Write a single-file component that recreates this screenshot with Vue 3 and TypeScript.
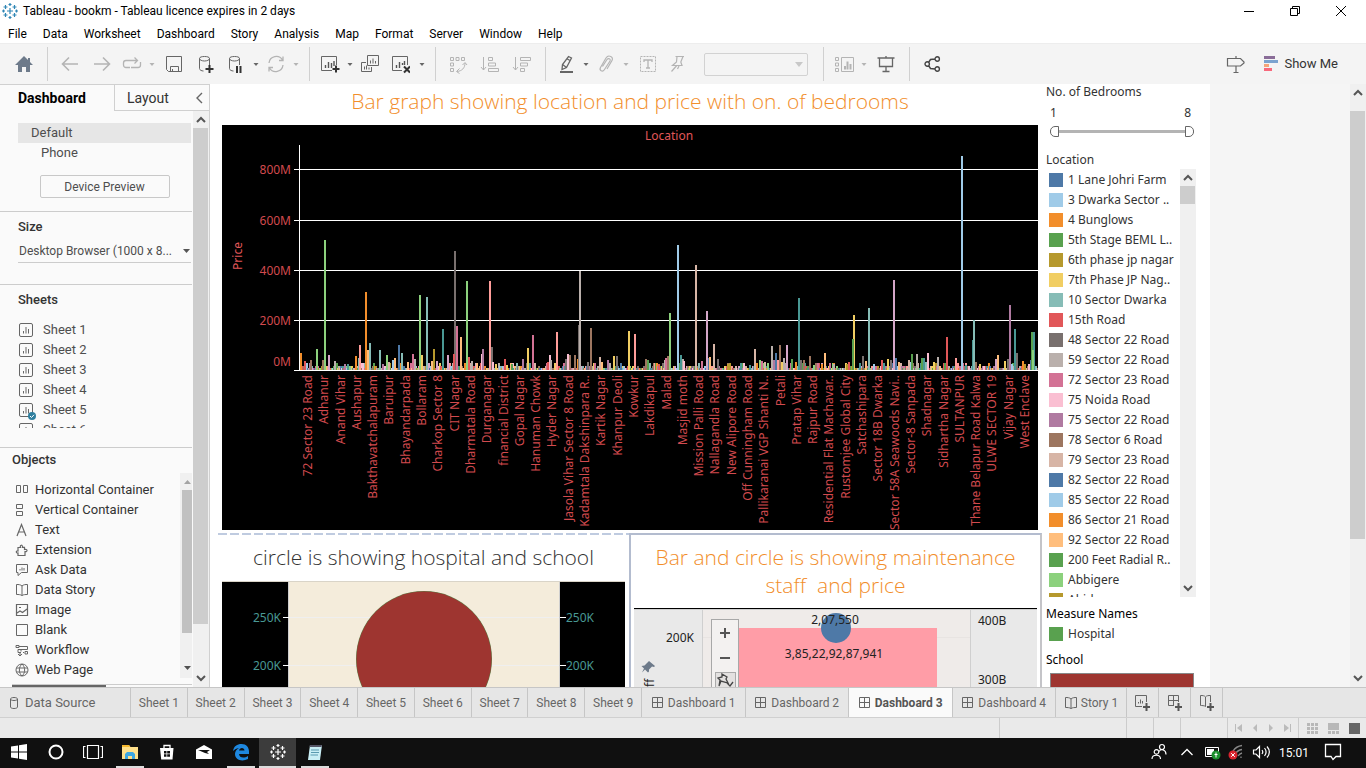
<script setup lang="ts">
import { ref } from 'vue'

interface Tool {
  icon: string
  label: string
  size?: 'narrow' | 'caret'
  dim?: boolean
}

const menus = ['File', 'Data', 'Worksheet', 'Dashboard', 'Story', 'Analysis', 'Map', 'Format', 'Server', 'Window', 'Help']

const caret = (label: string, dim = false): Tool => ({ icon: 'caret', label, size: 'caret', dim })

const toolGroups: Tool[][] = [
  [
    { icon: 'back', label: 'Undo', dim: true },
    { icon: 'forward', label: 'Redo', dim: true },
    { icon: 'loop', label: 'Replay', size: 'narrow', dim: true },
    caret('Replay options', true),
    { icon: 'save', label: 'Save' },
    { icon: 'db-add', label: 'New data source' },
    { icon: 'db-pause', label: 'Pause auto updates', size: 'narrow' },
    caret('Update options'),
    { icon: 'refresh', label: 'Run update', size: 'narrow', dim: true },
    caret('Run options', true),
  ],
  [
    { icon: 'sheet-add', label: 'New worksheet', size: 'narrow' },
    caret('New worksheet options'),
    { icon: 'duplicate', label: 'Duplicate', size: 'narrow' },
    { icon: 'sheet-clear', label: 'Clear sheet' },
    caret('Clear options'),
  ],
  [
    { icon: 'swap', label: 'Swap rows and columns', dim: true },
    { icon: 'sort-asc', label: 'Sort ascending', dim: true },
    { icon: 'sort-desc', label: 'Sort descending', dim: true },
  ],
]

const editTools: Tool[] = [
  { icon: 'highlighter', label: 'Highlight', size: 'narrow' },
  caret('Highlight options'),
  { icon: 'clip', label: 'Group members', size: 'narrow', dim: true },
  caret('Group options', true),
  { icon: 'text-box', label: 'Show mark labels', dim: true },
  { icon: 'pin', label: 'Fix axes', size: 'narrow', dim: true },
]

const viewTools: Tool[] = [
  { icon: 'cards', label: 'Show or hide cards', size: 'narrow', dim: true },
  caret('Card options', true),
  { icon: 'present', label: 'Presentation mode' },
]

const sheets = [1, 2, 3, 4, 5, 6]
const objects = [
  ['horizontal', 'Horizontal Container'],
  ['vertical', 'Vertical Container'],
  ['letter', 'Text'],
  ['extension', 'Extension'],
  ['ask', 'Ask Data'],
  ['book', 'Data Story'],
  ['image', 'Image'],
  ['blank', 'Blank'],
  ['workflow', 'Workflow'],
  ['globe', 'Web Page'],
]

const low = ref(1)
const high = ref(8)

const legend = [
  ['1 Lane Johri Farm', '#4e79a7'],
  ['3 Dwarka Sector ..', '#a0cbe8'],
  ['4 Bunglows', '#f28e2b'],
  ['5th Stage BEML L..', '#59a14f'],
  ['6th phase jp nagar', '#b6992d'],
  ['7th Phase JP Nag..', '#f1ce63'],
  ['10 Sector Dwarka', '#86bcb6'],
  ['15th Road', '#e15759'],
  ['48 Sector 22 Road', '#79706e'],
  ['59 Sector 22 Road', '#bab0ac'],
  ['72 Sector 23 Road', '#d37295'],
  ['75 Noida Road', '#fabfd2'],
  ['75 Sector 22 Road', '#b07aa1'],
  ['78 Sector 6 Road', '#9d7660'],
  ['79 Sector 23 Road', '#d7b5a6'],
  ['82 Sector 22 Road', '#4e79a7'],
  ['85 Sector 22 Road', '#a0cbe8'],
  ['86 Sector 21 Road', '#f28e2b'],
  ['92 Sector 22 Road', '#ffbe7d'],
  ['200 Feet Radial R..', '#59a14f'],
  ['Abbigere', '#8cd17d'],
  ['Abids', '#b6992d'],
]

/* Tableau 20 palette, keyed by a short code used in the bar list */
const palette: Record<string, string> = {
  b: '#4e79a7', B: '#a0cbe8', o: '#f28e2b', O: '#ffbe7d', g: '#59a14f', G: '#8cd17d',
  y: '#b6992d', Y: '#f1ce63', t: '#499894', T: '#86bcb6', r: '#e15759', R: '#ff9d9a',
  k: '#79706e', K: '#bab0ac', p: '#d37295', P: '#fabfd2', v: '#b07aa1', V: '#d4a6c8',
  n: '#9d7660', N: '#d7b5a6',
}

/* x offset from the axis, height, colour code */
const priceBars: [number, number, string][] = [
  [0, 17, 'o'], [4, 9, 'r'], [10, 10, 'n'], [16, 21, 'G'], [24, 130, 'G'], [22, 10, 'n'], [28, 15, 'V'], [34, 9, 'K'],
  [44, 6, 'v'], [47, 6, 't'], [55, 14, 'o'], [58, 12, 'T'], [59, 25, 'R'], [62, 7, 'P'], [65, 78, 'o'], [67, 20, 'O'],
  [69, 27, 'T'], [79, 20, 'T'], [82, 6, 'v'], [86, 15, 'G'], [88, 8, 'N'], [92, 10, 'B'], [94, 12, 'O'], [98, 25, 'b'],
  [101, 17, 'T'], [107, 8, 'O'], [112, 16, 'p'], [114, 11, 'K'], [119, 75, 'G'], [121, 15, 'Y'], [126, 73, 'T'],
  [131, 9, 'O'], [133, 21, 'y'], [136, 9, 'V'], [142, 41, 't'], [147, 15, 'V'], [154, 119, 'k'], [153, 16, 'r'],
  [156, 44, 'p'], [160, 33, 'O'], [166, 89, 'G'], [168, 13, 'r'], [171, 9, 'K'], [176, 7, 'O'], [181, 16, 'P'],
  [182, 21, 'v'], [191, 23, 'k'], [189, 89, 'R'], [192, 8, 'P'], [195, 6, 'Y'], [204, 11, 'r'], [206, 5, 'Y'], [211, 6, 'g'],
  [222, 11, 'v'], [227, 22, 'Y'], [232, 35, 'p'], [234, 7, 'N'], [247, 8, 'r'], [249, 15, 'P'], [250, 10, 'K'],
  [256, 38, 'R'], [265, 11, 'k'], [267, 16, 'P'], [269, 15, 'n'], [274, 15, 'n'], [277, 11, 'o'], [278, 45, 'k'],
  [279, 99, 'K'], [287, 8, 'k'], [290, 42, 'n'], [294, 7, 'p'], [299, 13, 'N'], [301, 8, 'O'], [307, 10, 'v'],
  [309, 7, 'K'], [313, 14, 'Y'], [316, 14, 'k'], [320, 7, 'b'], [328, 39, 'Y'], [334, 36, 'R'], [345, 11, 'n'],
  [347, 10, 'g'], [358, 6, 'r'], [364, 10, 'K'], [365, 12, 'p'], [367, 14, 'n'], [369, 57, 'G'], [377, 125, 'B'],
  [380, 15, 't'], [382, 11, 'K'], [383, 9, 'P'], [395, 105, 'N'], [401, 9, 'p'], [406, 59, 'V'], [408, 12, 'b'],
  [409, 13, 'O'], [413, 26, 'N'], [417, 11, 'k'], [427, 6, 'y'], [429, 7, 'y'], [440, 7, 't'], [443, 7, 'P'], [449, 5, 't'],
  [454, 21, 'N'], [456, 7, 'o'], [459, 10, 'G'], [461, 9, 'p'], [464, 8, 'N'], [467, 7, 'G'], [471, 24, 'K'], [473, 10, 'v'],
  [475, 17, 'b'], [477, 10, 'R'], [479, 25, 'n'], [481, 8, 'Y'], [483, 12, 'K'], [486, 25, 'V'], [491, 11, 'g'],
  [495, 8, 'o'], [498, 72, 't'], [500, 10, 'k'], [503, 10, 'n'], [509, 14, 'n'], [513, 5, 'G'], [517, 7, 'p'], [521, 6, 'o'],
  [524, 17, 'O'], [533, 6, 'K'], [546, 6, 'y'], [548, 8, 'r'], [553, 55, 'Y'], [552, 31, 'g'], [559, 7, 't'], [562, 14, 'k'],
  [565, 9, 'O'], [568, 62, 'T'], [573, 6, 'B'], [581, 10, 'r'], [583, 7, 't'], [587, 11, 'Y'], [590, 10, 'k'], [593, 90, 'V'],
  [595, 12, 'b'], [598, 8, 'O'], [608, 10, 'N'], [610, 8, 'B'], [611, 16, 'g'], [616, 16, 'K'], [621, 12, 'g'], [623, 12, 't'],
  [625, 8, 'T'], [627, 17, 'P'], [633, 8, 'Y'], [637, 13, 'K'], [644, 7, 'g'], [646, 33, 'r'], [655, 12, 'R'], [661, 214, 'B'],
  [665, 5, 't'], [672, 30, 't'], [673, 50, 'T'], [675, 8, 'n'], [679, 6, 'Y'], [695, 11, 'V'], [697, 15, 'O'], [704, 9, 'Y'],
  [707, 11, 'k'], [709, 65, 'v'], [711, 6, 'B'], [714, 41, 't'], [716, 17, 'k'], [722, 9, 'o'], [724, 6, 'y'], [728, 6, 'P'],
  [730, 10, 'b'], [731, 38, 'g'], [733, 38, 't'], [732, 20, 'G'],
]

/* Low priced localities: a dense run of short bars along the axis */
const shortBars = (() => {
  const codes = Object.keys(palette)
  const list: [number, number, string][] = []
  let seed = 7
  const next = () => {
    seed = (seed * 1103515245 + 12345) % 2147483648
    return seed / 2147483648
  }
  for (let x = 0; x < 738; x += 1) {
    const r = next()
    const h = r < 0.6 ? 2 : r < 0.88 ? 4 : 7
    list.push([x, h, codes[Math.floor(next() * codes.length)]])
  }
  return list
})()

const bars = [...shortBars, ...priceBars].map(([x, h, c]) => ({ x: 78 + x, y: 245 - h, h, fill: palette[c] }))

const gridLines = [
  { y: 44, label: '800M', ty: 49 },
  { y: 95, label: '600M', ty: 100 },
  { y: 145, label: '400M', ty: 150 },
  { y: 195, label: '200M', ty: 200 },
  { y: 245, label: '0M', ty: 241 },
]

const places = [
  '72 Sector 23 Road', 'Adhanur', 'Anand Vihar', 'Aushapur', 'Bakthavatchalapuram', 'Baruipur', 'Bhayandarpada',
  'Bollaram', 'Charkop Sector 8', 'CIT Nagar', 'Dharmatala Road', 'Durganagar', 'financial District', 'Gopal Nagar',
  'Hanuman Chowk', 'Hyder Nagar', 'Jasola Vihar Sector 8 Road', 'Kadamtala Dakshinpara R..', 'Kartik Nagar',
  'Khanpur Deoli', 'Kowkur', 'Lakdikapul', 'Malad', 'Masjid moth', 'Mission Palli Road', 'Nallagandla Road',
  'New Alipore Road', 'Off Cunningham Road', 'Pallikaranai VGP Shanti N..', 'Petali', 'Pratap Vihar', 'Rajpur Road',
  'Residential Flat Machavar..', 'Rustomjee Global City', 'Satchashipara', 'Sector 18B Dwarka',
  'Sector 58A Seawoods Navi..', 'Sector-8 Sanpada', 'Shadnagar', 'Sidhartha Nagar', 'SULTANPUR',
  'Thane Belapur Road Kalwa', 'ULWE SECTOR 19', 'Vijay Nagar', 'West Enclave',
]
const placeX = (i: number) => Math.round(90 + (i * 717) / 44)

const sheetTabs = [1, 2, 3, 4, 5, 6, 7, 8, 9]
const dashTabs = [1, 2, 3, 4]
</script>

<template>
  <div class="app">
    <svg class="sprite" aria-hidden="true">
      <symbol id="logo" viewBox="0 0 16 16">
        <path d="M8 5v6M5 8h6M3.500 2v4M1.500 4h4M12.500 2v4M10.500 4h4M3.500 10v4M1.500 12h4M12.500 10v4M10.500 12h4M8 0v3M6.500 1.500h3M8 13v3M6.500 14.500h3M1.500 6.500v3M0 8h3M14.500 6.500v3M13 8h3" fill="none" stroke="currentColor" stroke-width="1.200" />
      </symbol>
      <symbol id="home" viewBox="0 0 20 20"><path d="M10 2 1 11h3v7h4v-5h4v5h4v-7h3l-3-3V4h-2v2z" fill="#6d7a8a" /></symbol>
      <symbol id="caret" viewBox="0 0 20 20"><path d="M7.500 9h5L10 12z" fill="currentColor" /></symbol>
      <symbol id="back" viewBox="0 0 20 20"><path d="M18 10H3M9 3.500 2.500 10 9 16.500" fill="none" stroke="currentColor" stroke-width="1.600" /></symbol>
      <symbol id="forward" viewBox="0 0 20 20"><path d="M2 10h15M11 3.500 17.500 10 11 16.500" fill="none" stroke="currentColor" stroke-width="1.600" /></symbol>
      <symbol id="loop" viewBox="0 0 20 20"><path d="M8 13.500H4a2.500 2.500 0 0 1-2.500-2.500V9A2.500 2.500 0 0 1 4 6.500h11M12.500 3.500l3 3-3 3M18.500 8v3a2.500 2.500 0 0 1-2.500 2.500H9" fill="none" stroke="currentColor" stroke-width="1.300" /></symbol>
      <symbol id="save" viewBox="0 0 20 20"><path d="M2.500 2.500h15v15h-13l-2-2zM6.500 17v-4.500h8V17M8.500 15v2" fill="none" stroke="currentColor" /></symbol>
      <symbol id="db-add" viewBox="0 0 20 20">
        <path d="M3.500 4.500v10c0 1.500 2 2.500 4 2.500M3.500 4.500C3.500 3 6 2.500 8.500 2.500s5 .5 5 2-2.500 2.500-5 2.500-5-1-5-2.500zM13.500 4.500V11" fill="none" stroke="currentColor" />
        <path d="M13.500 11v8M9.500 15h8" fill="none" stroke="#333" stroke-width="2" />
      </symbol>
      <symbol id="db-pause" viewBox="0 0 20 20">
        <path d="M3.500 4.500v10c0 1.500 2 2.500 4 2.500M3.500 4.500C3.500 3 6 2.500 8.500 2.500s5 .5 5 2-2.500 2.500-5 2.500-5-1-5-2.500zM13.500 4.500V11" fill="none" stroke="currentColor" />
        <path d="M11 12v7M14.500 12v7" fill="none" stroke="#333" stroke-width="2" />
      </symbol>
      <symbol id="refresh" viewBox="0 0 20 20"><path d="M3 9a7.300 7.300 0 0 1 13.500-3M17 2.500V6.500h-4M17 11a7.300 7.300 0 0 1-13.500 3M3 17.500v-4h4" fill="none" stroke="currentColor" stroke-width="1.300" /></symbol>
      <symbol id="sheet-add" viewBox="0 0 20 20">
        <path d="M16.500 11V2.500h-15v14H12" fill="none" stroke="currentColor" />
        <path d="M5.500 14v-3M8.500 14V8M11.500 14V9M14 12V7" fill="none" stroke="#555" stroke-width="1.400" />
        <path d="M16 11.500v7M12.500 15h7" fill="none" stroke="#333" stroke-width="2" />
      </symbol>
      <symbol id="duplicate" viewBox="0 0 20 20">
        <path d="M7.500 1.500h11v10h-11zM6 8.500H1.500v9h10V13" fill="none" stroke="currentColor" />
        <path d="M10.500 9.500v-3M13 9.500v-5M15.500 9.500V7M4.500 15.500v-3M6.500 15.500v-4M9 15.500v-2" fill="none" stroke="currentColor" />
      </symbol>
      <symbol id="sheet-clear" viewBox="0 0 20 20">
        <path d="M17.500 11V2.500h-15v14H12" fill="none" stroke="currentColor" />
        <path d="M6.500 14v-3M9.500 14V8M12.500 11V9M14.500 11V7" fill="none" stroke="#555" stroke-width="1.400" />
        <path d="M14 12.500l6 6M20 12.500l-6 6" fill="none" stroke="#333" stroke-width="2" />
      </symbol>
      <symbol id="swap" viewBox="0 0 20 20"><path d="M2.500 3.500h3v3h-3zM8 3.500h3v3H8zM13.500 3.500h3v3h-3zM2.500 9h3v3h-3zM2.500 14.500h3v3h-3zM17 9c0 5-3 8-8 8.500M14.500 11 17 8.500l2 2.500M11.500 14.500 8.500 17.500l3 2" fill="none" stroke="currentColor" /></symbol>
      <symbol id="sort-asc" viewBox="0 0 20 20"><path d="M3.500 3v13M1 13l2.500 3L6 13M8.500 3.500h4v3h-4zM8.500 9h7v3h-7zM8.500 14.500h10v3h-10z" fill="none" stroke="currentColor" /></symbol>
      <symbol id="sort-desc" viewBox="0 0 20 20"><path d="M3.500 3v13M1 13l2.500 3L6 13M8.500 3.500h10v3h-10zM8.500 9h7v3h-7zM8.500 14.500h4v3h-4z" fill="none" stroke="currentColor" /></symbol>
      <symbol id="highlighter" viewBox="0 0 20 20">
        <path d="M12.500 2.500l3 1.500-5 9.500-4.500 2 .5-5zM6.500 10.500l4 3M10.500 4.500 14 6.500" fill="none" stroke="currentColor" stroke-width="1.300" />
        <path d="M4 18h13" stroke="currentColor" stroke-width="2" />
      </symbol>
      <symbol id="clip" viewBox="0 0 20 20"><path d="M6.500 12.500 11 5.500c1.500-2 4-.5 3 1.500L8.500 15.500c-2 3-5.500 1-4-2L10 4c2.500-4 8-1 6 2.500l-5 8.500" fill="none" stroke="currentColor" stroke-width="1.200" /></symbol>
      <symbol id="text-box" viewBox="0 0 20 20">
        <path d="M2.500 2.500h15v15h-15z" fill="none" stroke="currentColor" stroke-dasharray="2 1" />
        <path d="M6 8V6h8v2M10 6v8M8 14h4" fill="none" stroke="currentColor" stroke-width="1.300" />
      </symbol>
      <symbol id="pin" viewBox="0 0 20 20"><path d="M7.500 2.500h8.500M9 2.500 8.500 8l-4 3.500h9.500L12.800 8 15 2.500M8.800 11.500 3.500 17.500M11 12l-1.500 3" fill="none" stroke="currentColor" stroke-width="1.200" /></symbol>
      <symbol id="cards" viewBox="0 0 20 20">
        <path d="M1.500 3.500h3v3h-3zM1.500 9h3v3h-3zM1.500 14.500h3v3h-3zM7.500 3.500h12v14h-12z" fill="none" stroke="currentColor" />
        <path d="M11 15.500V12M13.500 15.500v-8M16.500 15.500V10" fill="none" stroke="currentColor" stroke-width="2" />
      </symbol>
      <symbol id="present" viewBox="0 0 20 20"><path d="M1.500 4h17M3.500 4v8.500h13V4M10 2v2M10 12.500v5M6.500 17.500h7" fill="none" stroke="currentColor" stroke-width="1.300" /></symbol>
      <symbol id="share" viewBox="0 0 20 20"><path d="M3 10a2.200 2.200 0 1 0 4.400 0A2.200 2.200 0 1 0 3 10zM13 5a2.200 2.200 0 1 0 4.400 0A2.200 2.200 0 1 0 13 5zM13 15a2.200 2.200 0 1 0 4.400 0A2.200 2.200 0 1 0 13 15zM6.500 8.500 8.500 5.500 13 5M6.500 11.500l2 3 4.500.5" fill="none" stroke="#444" stroke-width="1.400" /></symbol>
      <symbol id="signpost" viewBox="0 0 20 20"><path d="M1.500 4.500h13l3.500 3.500v1l-3.500 3h-13zM10 2v2.500M10 12v7M7.500 18.500h5" fill="none" stroke="currentColor" stroke-width="1.200" /></symbol>

      <symbol id="sheet" viewBox="0 0 14 14"><path d="M.5 2a1.500 1.500 0 0 1 1.500-1.500h10a1.500 1.500 0 0 1 1.500 1.500v10a1.500 1.500 0 0 1-1.500 1.500H2A1.500 1.500 0 0 1 .5 12zM4.500 10.500V8M7 10.500V4M9.500 10.500V6" fill="none" stroke="currentColor" /></symbol>
      <symbol id="horizontal" viewBox="0 0 14 14"><path d="M1.500 2.500h4v7h-4zM8.500 2.500h4v7h-4z" fill="none" stroke="currentColor" /></symbol>
      <symbol id="vertical" viewBox="0 0 14 14"><path d="M1.500 1.500h6v4h-6zM1.500 8.500h6v4h-6z" fill="none" stroke="currentColor" /></symbol>
      <symbol id="letter" viewBox="0 0 14 14"><path d="M2 13 6.500 1.500 11 13M3.500 9h6" fill="none" stroke="currentColor" stroke-width="1.200" /></symbol>
      <symbol id="extension" viewBox="0 0 14 14"><path d="M3 6V4.500h2.500c-1-3 2.500-3 2-.2h2V6.500c3-1 3.500 2.500.5 2.200v3.800H3V10C1 10.500.5 7.500 3 8z" fill="none" stroke="currentColor" stroke-width="1.200" /></symbol>
      <symbol id="ask" viewBox="0 0 14 14"><path d="M1.500 1.500h11v8h-6L3 12.500v-3H1.500zM5 7.500V6M7 7.500v-3M9 7.500V5" fill="none" stroke="currentColor" /></symbol>
      <symbol id="book" viewBox="0 0 14 14"><path d="M1.500 1.500c2 0 4 0 5.500 1.500 1.500-1.500 3.500-1.500 5.500-1.500v10c-2 0-4 0-5.500 1-1.500-1-3.500-1-5.500-1zM7 3v9.500" fill="none" stroke="currentColor" /></symbol>
      <symbol id="image" viewBox="0 0 14 14"><path d="M1.500 1.500h11v11h-11zM2 10l3-2 2.500 1.500L12 6M4 4.500h2" fill="none" stroke="currentColor" stroke-width="1.200" /></symbol>
      <symbol id="blank" viewBox="0 0 14 14"><path d="M1.500 1.500h11v11h-11z" fill="none" stroke="currentColor" /></symbol>
      <symbol id="workflow" viewBox="0 0 14 14"><path d="M1 2.500h3v2H1zM4 3.500h8.500v3H3v3h3M6 6.500v2M9 9.500h-1M10 8.500h2.500v2.500H10zM5 9v4M3 11l2 2 2-2" fill="none" stroke="currentColor" /></symbol>
      <symbol id="globe" viewBox="0 0 14 14"><path d="M7 1a6 6 0 1 0 0 12A6 6 0 1 0 7 1zM7 1c-3.500 3-3.500 9 0 12M7 1c3.500 3 3.500 9 0 12M1.500 5h11M1.500 9h11" fill="none" stroke="currentColor" /></symbol>
      <symbol id="cylinder" viewBox="0 0 14 14"><path d="M3.500 3c0-2 7-2 7 0v8c0 2-7 2-7 0zM3.500 3c0 2 7 2 7 0" fill="none" stroke="currentColor" /></symbol>
      <symbol id="grid" viewBox="0 0 14 14"><path d="M1.500 1.500h10v10h-10zM1.500 6.500h10M6.500 1.500v10" fill="none" stroke="currentColor" /></symbol>
      <symbol id="new-sheet" viewBox="0 0 18 18"><path d="M12.500 8V1.500h-11v11H8M4.500 9.500V8M6.500 9.500v-4M8.500 9.500V7" fill="none" stroke="#666" /><path d="M12.500 9v8M9 13h7" stroke="#555" stroke-width="2" /></symbol>
      <symbol id="new-dash" viewBox="0 0 18 18"><path d="M12.500 8V1.500h-10v10H8M2.500 6.500h10M7.500 1.500v10" fill="none" stroke="#666" /><path d="M12.500 9v8M9 13h7" stroke="#555" stroke-width="2" /></symbol>
      <symbol id="new-story" viewBox="0 0 18 18"><path d="M8 12.500c-2-1-4-1-5.500-1v-10c2 0 4 0 5 1.500 1-1.500 3-1.500 5-1.500V8M7.500 3v9" fill="none" stroke="#666" /><path d="M12.500 9v8M9 13h7" stroke="#555" stroke-width="2" /></symbol>
      <symbol id="chev-up" viewBox="0 0 12 12"><path d="M2 8l4-4 4 4" fill="none" stroke="#555" stroke-width="2" /></symbol>
      <symbol id="chev-down" viewBox="0 0 12 12"><path d="M2 4l4 4 4-4" fill="none" stroke="#555" stroke-width="2" /></symbol>
    </svg>

    <header class="titlebar">
      <svg class="app-logo"><use href="#logo" /></svg>
      <h1>Tableau - bookm - Tableau licence expires in 2 days</h1>
      <div class="window-buttons">
        <button type="button" aria-label="Minimize"><svg viewBox="0 0 12 12"><path d="M1 6.500h10" stroke="#000" /></svg></button>
        <button type="button" aria-label="Restore"><svg viewBox="0 0 12 12"><path d="M1.500 3.500h7v7h-7zM3.500 3V1.500h7v7H9" fill="none" stroke="#000" /></svg></button>
        <button type="button" aria-label="Close"><svg viewBox="0 0 12 12"><path d="M1 1l10 10M11 1 1 11" stroke="#000" /></svg></button>
      </div>
    </header>

    <nav class="menubar" aria-label="Main menu">
      <button v-for="m in menus" :key="m" type="button">{{ m }}</button>
    </nav>

    <div class="toolbar" role="toolbar" aria-label="Toolbar">
      <button type="button" class="tool home" aria-label="Start page"><svg><use href="#home" /></svg></button>
      <div v-for="(group, g) in toolGroups" :key="g" class="group">
        <button v-for="t in group" :key="t.label" type="button" class="tool" :class="[t.size, { dim: t.dim }]" :aria-label="t.label">
          <svg><use :href="'#' + t.icon" /></svg>
        </button>
      </div>
      <div class="group">
        <button v-for="t in editTools" :key="t.label" type="button" class="tool" :class="[t.size, { dim: t.dim }]" :aria-label="t.label">
          <svg><use :href="'#' + t.icon" /></svg>
        </button>
        <div class="fit">
          <select aria-label="Fit"><option></option></select>
          <svg viewBox="0 0 8 5"><path d="M0 0h8L4 5z" fill="#c8c8c8" /></svg>
        </div>
      </div>
      <div class="group">
        <button v-for="t in viewTools" :key="t.label" type="button" class="tool" :class="[t.size, { dim: t.dim }]" :aria-label="t.label">
          <svg><use :href="'#' + t.icon" /></svg>
        </button>
      </div>
      <div class="group">
        <button type="button" class="tool" aria-label="Share"><svg><use href="#share" /></svg></button>
      </div>
      <button type="button" class="tool guide" aria-label="Guide"><svg><use href="#signpost" /></svg></button>
      <button type="button" class="show-me">
        <svg viewBox="0 0 14 16"><path d="M0 0h11v3H0z" fill="#8a6d98" /><path d="M0 4h14v3H0z" fill="#7ba3cf" /><path d="M0 8h5v3H0z" fill="#f4a57a" /><path d="M0 12h8v3H0z" fill="#f8697c" /></svg>
        Show Me
      </button>
    </div>

    <main class="workspace">
      <aside class="sidebar">
        <div class="side-tabs" role="tablist">
          <button type="button" role="tab" aria-selected="true" class="side-tab active">Dashboard</button>
          <button type="button" role="tab" aria-selected="false" class="side-tab other">Layout</button>
          <button type="button" class="collapse" aria-label="Collapse pane"><svg viewBox="0 0 8 12"><path d="M7 1 2 6l5 5" fill="none" stroke="#666" stroke-width="1.400" /></svg></button>
        </div>
        <div class="side-scroll">
          <div class="side-content">
            <section class="devices">
              <button type="button" class="device selected">Default</button>
              <button type="button" class="device phone">Phone</button>
              <button type="button" class="preview">Device Preview</button>
            </section>
            <section class="size">
              <h2><label for="size-select">Size</label></h2>
              <div class="size-box">
                <select id="size-select"><option>Desktop Browser (1000 x 8...</option></select>
                <svg viewBox="0 0 8 5"><path d="M0 0h7L3.500 4z" fill="#555" /></svg>
              </div>
            </section>
            <section class="sheets">
              <h2>Sheets</h2>
              <ul>
                <li v-for="s in sheets" :key="s">
                  <span class="sheet-icon"><svg class="glyph"><use href="#sheet" /></svg>
                    <svg v-if="s === 5" class="badge" viewBox="0 0 8 8"><circle cx="4" cy="4" r="4" fill="#2f7f9f" /><path d="M2 4l1.500 1.500L6 2.800" fill="none" stroke="#fff" /></svg>
                  </span>
                  Sheet {{ s }}
                </li>
              </ul>
            </section>
            <section class="objects">
              <h2>Objects</h2>
              <div class="objects-body">
                <ul>
                  <li v-for="o in objects" :key="o[1]"><svg class="glyph"><use :href="'#' + o[0]" /></svg>{{ o[1] }}</li>
                </ul>
                <div class="mini-scroll">
                  <svg viewBox="0 0 8 5"><path d="M0 4h7L3.500 0z" fill="#a3a3a3" /></svg>
                  <div class="mini-thumb"></div>
                  <svg viewBox="0 0 8 5"><path d="M0 0h7L3.500 4z" fill="#505050" /></svg>
                </div>
              </div>
              <div class="h-scroll"><div></div></div>
            </section>
          </div>
          <div class="scrollbar">
            <svg><use href="#chev-up" /></svg>
            <div class="thumb side-thumb"></div>
            <svg><use href="#chev-down" /></svg>
          </div>
        </div>
      </aside>

      <div class="canvas">
        <div class="dashboard">
          <div class="views">
            <section>
              <h2 class="view-title orange">Bar graph showing location and price with on. of bedrooms</h2>
              <svg class="price-chart" viewBox="0 0 816 405" role="img" aria-label="Price by location">
                <rect width="816" height="405" fill="#000" />
                <text x="447" y="15" class="head" text-anchor="middle">Location</text>
                <text transform="translate(20 131) rotate(-90)" class="head" text-anchor="middle">Price</text>
                <g v-for="g in gridLines" :key="g.y">
                  <rect x="72" :y="g.y" width="744" height="1" fill="#fff" />
                  <text x="69" :y="g.ty" class="axis" text-anchor="end">{{ g.label }}</text>
                </g>
                <rect v-for="(b, i) in bars" :key="i" :x="b.x" :y="b.y" width="2" :height="b.h" :fill="b.fill" />
                <rect x="77" y="20" width="1" height="226" fill="#fff" />
                <text v-for="(p, i) in places" :key="p" :transform="`translate(${placeX(i)} 250) rotate(-90)`" class="place" text-anchor="end">{{ p }}</text>
              </svg>
            </section>

            <div class="lower">
              <section class="lower-left">
                <h2 class="view-title">circle is showing hospital and school</h2>
                <svg class="half-chart" viewBox="0 0 403 106" role="img" aria-label="Hospital and school">
                  <rect width="403" height="106" fill="#000" />
                  <rect x="67" width="271" height="106" fill="#f4ecdb" />
                  <rect width="403" height="1" fill="#d9d4c8" />
                  <path d="M67 36.500h271M67 84.500h271" stroke="#efefef" />
                  <path d="M66.500 1v105M337.500 1v105" stroke="#cfcfcf" />
                  <path d="M61 36.500h6M61 84.500h6M338 36.500h6M338 84.500h6" stroke="#fff" />
                  <circle cx="202" cy="78" r="68" fill="#5e7a45" />
                  <circle cx="202" cy="78" r="67.500" fill="#9e3530" />
                  <g class="teal">
                    <text x="59" y="41" text-anchor="end">250K</text>
                    <text x="59" y="89" text-anchor="end">200K</text>
                    <text x="344" y="41">250K</text>
                    <text x="344" y="89">200K</text>
                  </g>
                </svg>
              </section>

              <section class="lower-right">
                <h2 class="view-title orange">Bar and circle is showing maintenance staff &nbsp;and price</h2>
                <svg class="half-chart" viewBox="0 0 403 79" role="img" aria-label="Maintenance staff and price">
                  <rect width="403" height="79" fill="#e9e9e9" />
                  <rect x="68" width="268" height="79" fill="#efebe9" />
                  <path d="M0 .5h403" stroke="#000" />
                  <path d="M0 1.500h403M68.500 2v77M336.500 2v77" stroke="#cfcfcf" />
                  <path d="M69 29.500h267" stroke="#e8e4e2" />
                  <rect x="104" y="20" width="199" height="59" fill="#ff9da7" />
                  <circle cx="202" cy="20" r="15" fill="#4e79a7" />
                  <g class="dark">
                    <text x="60" y="34" text-anchor="end">200K</text>
                    <text x="344" y="17">400B</text>
                    <text x="344" y="76">300B</text>
                    <text x="201" y="16" text-anchor="middle">2,07,550</text>
                    <text x="200" y="50" text-anchor="middle">3,85,22,92,87,941</text>
                    <text transform="translate(20 79) rotate(-90)">ff</text>
                  </g>
                  <path d="M15 53l6 5-1 1-2-.5-3 3 0 2-1 1-3-3-3 3 2-4-2.500-2.500 3-.5 3-3z" fill="#6d7a8a" />
                  <rect x="77.500" y="11.500" width="27" height="70" fill="#f3f1f0" stroke="#a8a8a8" />
                  <path d="M86 25h10M91 20v10M86 50h10" stroke="#555" stroke-width="2" />
                  <rect x="81.500" y="64.500" width="20" height="20" fill="#e3e1e0" stroke="#aaa" />
                  <path d="M88 66l5 3-1 2 2 4-7-2-2 5 1-6-2-2 4-1zM93 75l3 3 3-4" fill="none" stroke="#444" stroke-width="1.300" />
                </svg>
              </section>
            </div>
          </div>

          <div class="legends">
            <h3>No. of Bedrooms</h3>
            <div class="range-values"><output for="low">{{ low }}</output><output for="high">{{ high }}</output></div>
            <div class="range">
              <div class="track"></div>
              <input id="low" v-model="low" class="low" type="range" min="1" max="8" aria-label="Minimum bedrooms" />
              <input id="high" v-model="high" class="high" type="range" min="1" max="8" aria-label="Maximum bedrooms" />
            </div>
            <h3>Location</h3>
            <div class="legend-box">
              <ul>
                <li v-for="l in legend" :key="l[0]"><span class="swatch" :style="{ background: l[1] }"></span>{{ l[0] }}</li>
              </ul>
              <div class="scrollbar">
                <svg><use href="#chev-up" /></svg>
                <div class="thumb legend-thumb"></div>
                <svg><use href="#chev-down" /></svg>
              </div>
            </div>
            <h3 class="strong">Measure Names</h3>
            <ul class="measure"><li><span class="swatch green"></span>Hospital</li></ul>
            <h3 class="strong school">School</h3>
            <div class="school-bar"></div>
          </div>
        </div>
        <div class="scrollbar canvas-scroll">
          <svg><use href="#chev-up" /></svg>
          <div class="thumb canvas-thumb"></div>
          <svg><use href="#chev-down" /></svg>
        </div>
      </div>
    </main>

    <nav class="tabs" aria-label="Sheets">
      <button type="button" class="tab source"><svg class="glyph"><use href="#cylinder" /></svg>Data Source</button>
      <div class="tab-set sheet-set">
        <button v-for="s in sheetTabs" :key="s" type="button" class="tab">Sheet {{ s }}</button>
      </div>
      <div class="tab-set dash-set">
        <button v-for="d in dashTabs" :key="d" type="button" class="tab" :class="{ current: d === 3 }"><svg class="glyph"><use href="#grid" /></svg>Dashboard {{ d }}</button>
      </div>
      <button type="button" class="tab story-tab"><svg class="glyph"><use href="#book" /></svg>Story 1</button>
      <button type="button" class="tab new-tab" aria-label="New worksheet"><svg><use href="#new-sheet" /></svg></button>
      <button type="button" class="tab new-tab" aria-label="New dashboard"><svg><use href="#new-dash" /></svg></button>
      <button type="button" class="tab new-tab" aria-label="New story"><svg><use href="#new-story" /></svg></button>
    </nav>

    <div class="status">
      <div class="cell wide"></div>
      <div class="cell small"></div>
      <div class="cell small"></div>
      <div class="cell mid"></div>
      <div class="cell pager">
        <button type="button" aria-label="First"><svg viewBox="0 0 8 8"><path d="M0 0h1v8H0zM7 0v8L2 4z" /></svg></button>
        <button type="button" aria-label="Previous"><svg viewBox="0 0 8 8"><path d="M6 0v8L2 4z" /></svg></button>
        <button type="button" aria-label="Next"><svg viewBox="0 0 8 8"><path d="M2 0v8l4-4z" /></svg></button>
        <button type="button" aria-label="Last"><svg viewBox="0 0 8 8"><path d="M7 0h1v8H7zM1 0v8l5-4z" /></svg></button>
      </div>
      <div class="modes">
        <button type="button" aria-label="Sheet sorter"><svg viewBox="0 0 12 12"><path d="M0 1h3v3H0zM4 1h3v3H4zM8 1h3v3H8zM0 5h3v3H0zM4 5h3v3H4zM8 5h3v3H8zM0 9h3v3H0zM4 9h3v3H4zM8 9h3v3H8z" fill="#b8b8b8" /></svg></button>
        <button type="button" aria-label="Filmstrip"><svg viewBox="0 0 12 12"><path d="M0 1h11v7H0zM0 9h3v3H0zM4 9h3v3H4zM8 9h3v3H8z" fill="#b8b8b8" /></svg></button>
        <button type="button" aria-label="Tabs"><svg viewBox="0 0 12 12"><path d="M0 1h11v11H0z" fill="#666" /></svg></button>
      </div>
    </div>

    <footer class="taskbar">
      <button type="button" aria-label="Start"><svg viewBox="0 0 20 20"><path d="M2 4.500 9 3.500V9.500H2zM10 3.300 18 2v7.500h-8zM2 10.500h7v6l-7-1zM10 10.500h8V18l-8-1.300z" fill="#fff" /></svg></button>
      <button type="button" aria-label="Search"><svg viewBox="0 0 20 20"><circle cx="10" cy="10" r="6.500" fill="none" stroke="#fff" stroke-width="2" /></svg></button>
      <button type="button" aria-label="Task view"><svg viewBox="0 0 20 20"><path d="M4.500 3.500h11v13h-11zM2.500 4.500h-2v11h2M17.500 4.500h2v11h-2" fill="none" stroke="#fff" stroke-width="1.200" /></svg></button>
      <button type="button" class="open" aria-label="File Explorer"><svg viewBox="0 0 20 20"><path d="M2 3h7l1.500 2H18v12H2z" fill="#ffe08a" /><path d="M2 3h7l1 2H2z" fill="#f5b82e" /><path d="M5 17v-5l2-2h6l2 2v5h-3v-3H8v3z" fill="#3ea7e0" /></svg></button>
      <button type="button" aria-label="Store"><svg viewBox="0 0 20 20"><path d="M3 6h13.500l-1 11.500H4.200z" fill="#fff" /><path d="M7 6V3.500h6V6" fill="none" stroke="#fff" stroke-width="1.300" /><path d="M7 9h2.500v2.500H7zM10.200 9h2.800v2.500h-2.800zM7 12.200h2.500v2.500H7zM10.200 12.200h2.800v2.500h-2.800z" fill="#101010" /></svg></button>
      <button type="button" aria-label="Mail"><svg viewBox="0 0 20 20"><path d="M2 7.500 10 3l8 4.500V17H2z" fill="#fff" /><path d="M4 8h12l-3 2 2 2-4-1z" fill="#101010" /></svg></button>
      <button type="button" class="open" aria-label="Edge"><svg viewBox="0 0 20 20"><path d="M2 9C3 4 6 2 10.500 2c5 0 7.500 3.500 7.500 7.500V12H8c.3 4 5 4.500 9 2v3c-6 3-13 1-13-5 0-3 2-5 4-6-3 .5-5 2-6 3zM8 8.500h5.500C13.500 5 8.500 5 8 8.500z" fill="#1e88e0" fill-rule="evenodd" /></svg></button>
      <button type="button" class="open current" aria-label="Tableau"><svg class="white"><use href="#logo" /></svg></button>
      <button type="button" class="open" aria-label="Notepad"><svg viewBox="0 0 20 20"><path d="M5 3h12l-2 15H3z" fill="#c9eef5" /><path d="M5 3h12l-.5 2h-12z" fill="#556" /><path d="M6 8h8M6 10.500h8M5.500 13H13" stroke="#5a9ab0" /></svg></button>
      <div class="tray">
        <button type="button" aria-label="People"><svg viewBox="0 0 20 20"><path d="M5.500 11a2.300 2.300 0 1 1 4 0 2.300 2.300 0 0 1-4 0zM3 17c0-5 8.500-5 8.500 0M10.500 5a2.500 2.500 0 1 1 5 0 2.500 2.500 0 0 1-5 0zM10 9.500c2-3 7-2 7 3" fill="none" stroke="#fff" stroke-width="1.200" /></svg></button>
        <button type="button" aria-label="Hidden icons"><svg viewBox="0 0 20 20"><path d="M4.500 13 10 7.500l5.500 5.500" fill="none" stroke="#fff" stroke-width="1.300" /></svg></button>
        <button type="button" class="tight" aria-label="Battery"><svg viewBox="0 0 20 20"><path d="M2.500 5.500h13v9h-13z" fill="none" stroke="#fff" /><path d="M4 7h7v6H4z" fill="#fff" /><circle cx="13" cy="13" r="4.500" fill="#1b8f2c" /><path d="M13 10.500v5M11.500 12.500h3" stroke="#fff" /></svg></button>
        <button type="button" class="tight" aria-label="Network"><svg viewBox="0 0 20 20"><path d="M7 9c2-3 5-5 9-5.500M9 12c2-3 4-4 7-4.500M12 14c1-1.500 2-2.500 4-3M15 16v-1.500" fill="none" stroke="#888" stroke-width="1.300" /><circle cx="7" cy="13" r="4.500" fill="#d8232e" /><path d="M5.200 11.200l3.600 3.600M8.800 11.200l-3.600 3.600" stroke="#fff" /></svg></button>
        <button type="button" aria-label="Volume"><svg viewBox="0 0 20 20"><path d="M2.500 8v4h2.500l3.500 3.500v-11L5 8zM11 8c1 1.300 1 2.700 0 4M13.500 6c2 2.500 2 5.500 0 8M16 4.500c3 3.500 3 7.500 0 11" fill="none" stroke="#fff" stroke-width="1.200" /></svg></button>
        <time>15:01</time>
        <button type="button" class="notes" aria-label="Notifications"><svg viewBox="0 0 20 20"><path d="M2.500 2.500h15v12h-4.500L10 17.500 8 14.500H2.500z" fill="none" stroke="#fff" stroke-width="1.300" /></svg></button>
      </div>
    </footer>
  </div>
</template>

<style>
html,
body {
  margin: 0;
}
</style>

<style scoped>
.app {
  display: flex;
  flex-direction: column;
  height: 100vh;
  min-width: 1280px;
  overflow: hidden;
  background: #fff;
  color: #333;
  font: 13px/20px Roboto, sans-serif;
}
.app * {
  box-sizing: border-box;
}
.sprite {
  display: none;
}
button,
select {
  font: inherit;
  color: inherit;
  border: 0;
  background: none;
  padding: 0;
  margin: 0;
}
h1, h2, h3, ul {
  margin: 0;
  padding: 0;
  font-weight: 400;
}
li {
  list-style: none;
}
svg {
  flex: none;
  display: block;
}
.glyph {
  width: 14px;
  height: 14px;
  color: #666;
}

/* window chrome */
.titlebar {
  display: flex;
  align-items: center;
  height: 22px;
  flex: none;
  padding-left: 2px;
  color: #000;
}
.app-logo {
  width: 16px;
  height: 16px;
  color: #2f86b5;
}
.titlebar h1 {
  flex: 1;
  margin-left: 5px;
  font: 12px/24px Roboto, sans-serif;
}
.window-buttons {
  display: flex;
  padding-right: 2px;
}
.window-buttons button {
  width: 46px;
  height: 22px;
  display: grid;
  place-items: center;
}
.window-buttons svg {
  width: 12px;
  height: 12px;
}
.menubar {
  display: flex;
  height: 21px;
  flex: none;
}
.menubar button {
  padding: 0 8px;
  color: #000;
  font: 12px/24px Roboto, sans-serif;
}
.toolbar {
  display: flex;
  align-items: center;
  height: 41px;
  flex: none;
  background: #f4f4f4;
  border-top: 1px solid #ededed;
}
.tool {
  width: 32px;
  height: 32px;
  display: flex;
  align-items: center;
  justify-content: center;
  color: #666;
}
.tool svg {
  width: 20px;
  height: 20px;
}
.tool.narrow {
  width: 28px;
}
.tool.caret {
  width: 12px;
}
.tool.dim {
  color: #b4b4b4;
}
.tool.home {
  width: 47px;
}
.group {
  display: flex;
  align-items: center;
  height: 34px;
  padding: 0 7px 0 6px;
  border-left: 1px solid #d0d0d0;
}
.fit {
  display: grid;
  align-items: center;
  margin: 0 8px 0 12px;
}
.fit select,
.fit svg {
  grid-area: 1 / 1;
}
.fit select {
  appearance: none;
  width: 104px;
  height: 23px;
  border: 1px solid #d2d2d2;
  border-radius: 2px;
}
.fit svg {
  width: 8px;
  height: 5px;
  justify-self: end;
  margin-right: 5px;
}
.guide {
  margin-left: auto;
}
.show-me {
  display: flex;
  align-items: center;
  gap: 6px;
  margin: 0 28px 0 12px;
}
.show-me svg {
  width: 14px;
  height: 16px;
}

/* shared scrollbar */
.scrollbar {
  display: flex;
  flex-direction: column;
  align-items: center;
  flex: 0 0 16px;
  padding: 3px 1px 3px 0;
  background: #f0f0f0;
}
.scrollbar svg {
  width: 12px;
  height: 12px;
}
.thumb {
  width: 15px;
  background: #cdcdcd;
}

.workspace {
  display: flex;
  flex: 1;
  min-height: 0;
}
.sidebar {
  display: flex;
  flex-direction: column;
  flex: 0 0 210px;
  background: #fafafa;
  border: solid #d0d0d0;
  border-width: 1px 1px 0 0;
}
.side-tabs {
  display: flex;
  flex: none;
  height: 26px;
}
.side-tab.active {
  flex: 0 0 114px;
  padding-left: 18px;
  text-align: left;
  font-weight: 700;
  font-size: 14px;
  color: #000;
}
.side-tab.other {
  flex: 1;
  padding-left: 12px;
  text-align: left;
  font-size: 14px;
  border: solid #d0d0d0;
  border-width: 0 0 1px 1px;
}
.collapse {
  display: grid;
  place-items: center;
  width: 20px;
  border-bottom: 1px solid #d0d0d0;
}
.collapse svg {
  width: 8px;
  height: 12px;
}
.side-scroll {
  display: flex;
  flex: 1;
  min-height: 0;
}
.side-content {
  flex: 1;
  min-width: 0;
  margin-right: 1px;
}
.side-thumb {
  flex: 0 0 496px;
  margin: 2px 0 auto;
}
.side-content section {
  overflow: hidden;
}
.side-content section + section {
  border-top: 1px solid #ccc;
}
.side-content h2 {
  font-size: 13px;
  font-weight: 500;
}
.devices {
  display: flex;
  flex-direction: column;
  height: 100px;
  padding: 12px 1px 0 18px;
  color: #4e4e4e;
}
.device {
  height: 20px;
  padding-left: 13px;
  text-align: left;
}
.device.selected {
  background: #e6e6e6;
}
.device.phone {
  padding-left: 23px;
}
.preview {
  align-self: center;
  width: 130px;
  height: 23px;
  margin: 12px 0 0 0;
  font-size: 12px;
  border: 1px solid #c8c8c8;
  border-radius: 2px;
}
.size {
  height: 73px;
  padding: 5px 1px 0 18px;
}
.size-box {
  display: grid;
  align-items: center;
  margin-top: 3px;
  border-bottom: 1px solid #ccc;
  color: #4e4e4e;
}
.size-box select,
.size-box svg {
  grid-area: 1 / 1;
}
.size-box select {
  appearance: none;
  width: 100%;
  height: 22px;
  padding-left: 1px;
  font-size: 12px;
}
.size-box svg {
  width: 8px;
  height: 5px;
  justify-self: end;
}
.sheets {
  height: 163px;
  padding: 5px 0 0 18px;
}
.sheets ul {
  height: 108px;
  margin-top: 10px;
  overflow: hidden;
}
.sheets li {
  display: flex;
  align-items: center;
  height: 20px;
  gap: 10px;
  color: #4e4e4e;
}
.sheet-icon {
  position: relative;
  margin-left: 1px;
}
.badge {
  position: absolute;
  width: 8px;
  height: 8px;
  right: -3px;
  bottom: -3px;
}
.objects {
  padding: 2px 0 0 12px;
}
.objects-body {
  display: flex;
  justify-content: space-between;
  height: 205px;
  margin-top: 3px;
}
.objects-body ul {
  padding: 7px 0 0 3px;
}
.objects-body li {
  display: flex;
  align-items: center;
  gap: 6px;
  height: 20px;
}
.mini-scroll {
  display: flex;
  flex-direction: column;
  align-items: flex-end;
  justify-content: space-between;
  width: 12px;
  padding: 7px 0;
  background: #f0f0f0;
}
.mini-scroll svg {
  width: 8px;
  height: 5px;
}
.mini-thumb {
  width: 10px;
  height: 143px;
  margin: 5px 0 auto;
  background: #c1c1c1;
}
.h-scroll {
  height: 3px;
  margin-top: 6px;
  border-top: 1px solid #ccc;
}
.h-scroll div {
  width: 52%;
  height: 3px;
  background: #666;
}

/* canvas */
.canvas {
  display: flex;
  flex: 1;
  min-width: 0;
  background: #f5f5f5;
  overflow: hidden;
}
.dashboard {
  display: flex;
  flex: 0 1 1000px;
  min-width: 0;
  background: #fff;
}
.canvas-scroll {
  margin-left: auto;
}
.canvas-thumb {
  flex: 0 0 428px;
  margin: 12px 0 auto;
}
.views {
  flex: 1;
  min-width: 0;
  padding-left: 8px;
}
.view-title {
  text-align: center;
  font: 300 21px/34px "Open Sans", "Noto Sans", sans-serif;
  color: #333;
}
.view-title.orange {
  color: #f28e2b;
}
.views > section {
  padding: 0 4px;
}
.views > section .view-title {
  padding-bottom: 7px;
}
.price-chart,
.half-chart {
  width: 100%;
  height: auto;
}
.price-chart text,
.half-chart text {
  font: 12px "Noto Sans", sans-serif;
}
.price-chart text {
  fill: #d24a4e;
}
.price-chart .head {
  fill: #e15759;
}
.teal text {
  fill: #499894;
}
.dark text {
  fill: #222;
}
.lower {
  display: grid;
  grid-template-columns: 411fr 413fr;
  margin-top: 3px;
}
.lower-left {
  padding: 2px 4px 0;
  background: repeating-linear-gradient(90deg, #bfcbe0 0 9px, #fff 9px 12px) top / 100% 2px no-repeat;
}
.lower-left .view-title {
  line-height: 44px;
  padding-bottom: 2px;
}
.lower-right {
  padding: 8px 3px 0;
  border: solid #b3bccf;
  border-width: 2px 2px 0;
  border-right-color: #c4c4c8;
}
.lower-right .view-title {
  line-height: 28px;
  padding: 0 8px 9px;
}

/* legends */
.legends {
  flex: 0 0 168px;
  padding: 0 14px 0 4px;
  overflow: hidden;
  font: 12px/20px "Noto Sans", sans-serif;
}
.legends h3 {
  font: 12px/16px "Noto Sans", sans-serif;
}
.legends h3.strong {
  color: #000;
}
.range-values {
  display: flex;
  justify-content: space-between;
  padding: 3px 5px 0 4px;
}
.range {
  display: grid;
  align-items: center;
  height: 16px;
  margin: 0 2px 13px 4px;
}
.range > * {
  grid-area: 1 / 1;
}
.track {
  height: 3px;
  background: #b4b4b4;
}
.range input {
  appearance: none;
  width: 100%;
  height: 11px;
  margin: 0;
  background: none;
  pointer-events: none;
}
.range input::-webkit-slider-thumb {
  appearance: none;
  width: 9px;
  height: 11px;
  background: #fff;
  border: 1px solid #666;
  border-radius: 5px 0 0 5px;
  pointer-events: auto;
}
.range input.high::-webkit-slider-thumb {
  border-radius: 0 5px 5px 0;
}
.legend-box {
  display: flex;
  justify-content: space-between;
  height: 428px;
  margin: 1px 0 9px;
  overflow: hidden;
}
.legends li {
  display: flex;
  align-items: center;
  height: 20px;
  padding-left: 3px;
  gap: 5px;
  white-space: nowrap;
}
.swatch {
  width: 14px;
  height: 14px;
}
.swatch.green {
  background: #59a14f;
}
.legend-thumb {
  flex: 0 0 18px;
  margin: 2px 0 auto;
}
.legend-box ul {
  padding-top: 1px;
}
.measure {
  padding-top: 2px;
}
.legends h3.school {
  margin: 8px 0 5px;
}
.school-bar {
  height: 20px;
  margin: 0 2px 0 4px;
  background: #9e3530;
  border: 1px solid #888;
}

/* sheet tabs */
.tabs {
  display: flex;
  flex: none;
  height: 30px;
  background: #e6e6e6;
  border-top: 1px solid #c6c6c6;
  font-size: 12px;
  color: #666;
}
.tab {
  display: flex;
  align-items: center;
  justify-content: center;
  gap: 3px;
  border-right: 1px solid #c6c6c6;
  white-space: nowrap;
}
.source {
  width: 131px;
  justify-content: flex-start;
  gap: 4px;
  padding-left: 7px;
  font-size: 13px;
}
.tab-set {
  display: flex;
}
.tab-set .tab {
  flex: 1;
}
.sheet-set {
  flex: 0 0 511px;
}
.dash-set {
  flex: 0 0 414px;
}
.story-tab {
  width: 71px;
}
.current {
  font-weight: 700;
}
.tab.current {
  background: #fafafa;
  color: #555;
}
.new-tab {
  width: 32px;
}
.new-tab svg {
  width: 18px;
  height: 18px;
}

.status {
  display: flex;
  justify-content: flex-end;
  flex: none;
  height: 21px;
  background: #eaeaea;
  border-top: 1px solid #d0d0d0;
}
.cell {
  border-left: 1px solid #ccc;
  width: 47px;
}
.cell.wide {
  width: 127px;
}
.cell.small {
  width: 27px;
}
.cell.pager {
  display: flex;
  align-items: center;
  width: 71px;
  padding-left: 3px;
}
.pager button {
  width: 16px;
  display: grid;
  justify-items: center;
}
.pager svg {
  width: 8px;
  height: 8px;
  fill: #bbb;
}
.modes {
  display: flex;
  align-items: center;
  gap: 9px;
  width: 68px;
  padding-left: 8px;
  border-left: 1px solid #ccc;
}
.modes svg {
  width: 12px;
  height: 12px;
}

.taskbar {
  display: flex;
  flex: none;
  height: 30px;
  background: #101010;
  color: #fff;
}
.taskbar button {
  display: grid;
  place-items: center;
  width: 37px;
  border-bottom: 2px solid transparent;
}
.taskbar svg {
  width: 20px;
  height: 20px;
}
.taskbar button.open {
  background: linear-gradient(#dcdcdc, #dcdcdc) bottom / 28px 2px no-repeat border-box;
}
.taskbar button.current {
  background: linear-gradient(#dcdcdc, #dcdcdc) bottom / 37px 2px no-repeat border-box, #3c3c3c;
}
.taskbar svg.white {
  width: 16px;
  height: 16px;
  color: #fff;
}
.tray {
  display: flex;
  align-items: center;
  margin-left: auto;
  padding-right: 19px;
}
.tray button {
  width: 28px;
  height: 30px;
}
.tray button.tight {
  width: 23px;
}
.tray time {
  margin-left: 4px;
  font: 12px/30px Roboto, sans-serif;
}
.tray button.notes {
  margin-left: 10px;
}
</style>
